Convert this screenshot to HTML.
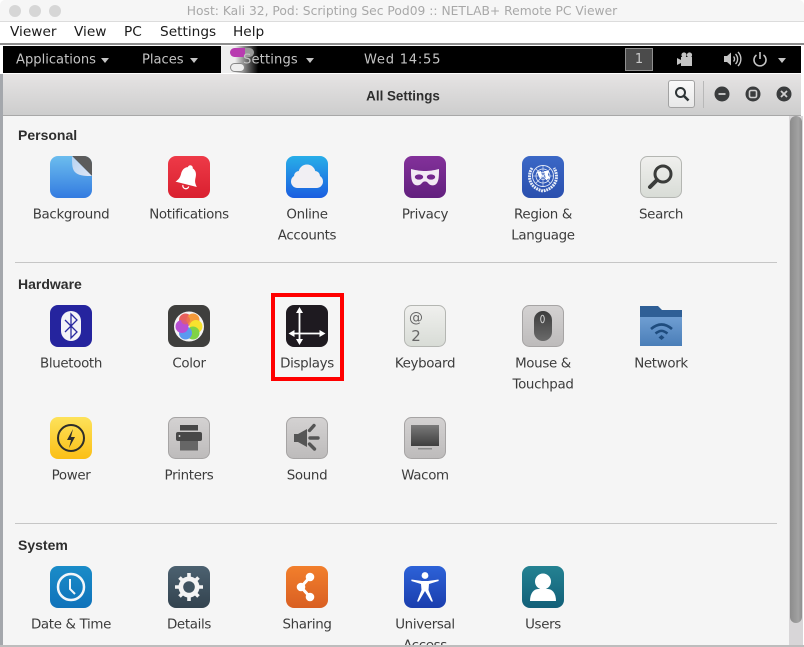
<!DOCTYPE html>
<html><head><meta charset="utf-8"><style>
html,body{margin:0;padding:0;width:804px;height:647px;overflow:hidden;background:#fff}
body{position:relative;font-family:"DejaVu Sans","Liberation Sans",sans-serif}
.a{position:absolute}
.t{position:absolute;white-space:nowrap;transform:translate(-50%,-50%);margin-top:1px;font-size:13.4px;letter-spacing:-.33px;color:#3c3c3c;line-height:1}
.h{position:absolute;left:18px;font-family:"Liberation Sans",sans-serif;font-size:14px;font-weight:bold;color:#2e2e2e;line-height:1;transform:translateY(-50%)}
.m{position:absolute;top:33px;transform:translateY(-50%);font-size:13.7px;color:#1a1a1a;line-height:1;white-space:nowrap}
.p{position:absolute;top:60px;transform:translateY(-50%);font-size:13.1px;color:#c4c4c4;line-height:1;white-space:nowrap}
svg.i{position:absolute;width:42px;height:42px}
.dot{position:absolute;top:5px;width:12px;height:12px;border-radius:50%;background:#d6d6d6}
.tri{position:absolute;width:0;height:0;border-left:4.5px solid transparent;border-right:4.5px solid transparent;border-top:5px solid #c4c4c4}
</style></head><body>
<div class="a" style="left:0;top:0;width:804px;height:22px;background:#f6f6f6;border-bottom:1px solid #dcdcdc;box-sizing:border-box;border-radius:5px 5px 0 0"></div>
<div class="dot" style="left:9px"></div><div class="dot" style="left:29px"></div><div class="dot" style="left:49px"></div>
<div class="a" style="left:0;width:804px;top:11px;transform:translateY(-50%);text-align:center;font-size:12.3px;color:#a8a8a8;line-height:1;white-space:nowrap">Host: Kali 32, Pod: Scripting Sec Pod09 :: NETLAB+ Remote PC Viewer</div>
<div class="m" style="left:10px">Viewer</div><div class="m" style="left:74px">View</div><div class="m" style="left:124px">PC</div><div class="m" style="left:160px">Settings</div><div class="m" style="left:233px">Help</div>
<div class="a" style="left:0;top:43px;width:804px;height:2px;background:#8e8e8e"></div>
<div class="a" style="left:0;top:74px;width:3px;height:573px;background:#a4a7ac"></div>
<div class="a" style="left:3px;top:46px;width:798px;height:27px;background:#000"></div>
<div class="a" style="left:221px;top:46px;width:37px;height:27px;background:linear-gradient(90deg,#eee 0,#eee 14px,#8a8a8a 23px,#000 37px)"></div>
<div class="a" style="left:230px;top:48px;width:24px;height:9px;border-radius:5px;background:linear-gradient(90deg,#b83cb0 62%,#999 62%)"></div>
<div class="a" style="left:230px;top:63px;width:13px;height:7px;border-radius:5px;border:1px solid #888;background:#eee"></div>
<div class="p" style="left:16px">Applications</div><div class="tri" style="left:101px;top:58px"></div>
<div class="p" style="left:142px">Places</div><div class="tri" style="left:190px;top:58px"></div>
<div class="p" style="left:243px;letter-spacing:.15px">Settings</div><div class="tri" style="left:306px;top:58px"></div>
<div class="p" style="left:364px;letter-spacing:.75px">Wed 14:55</div>
<div class="a" style="left:625px;top:48px;width:28px;height:23px;box-sizing:border-box;background:#4b4b4b;border:1px solid #909090;color:#c8c8c8;font-size:13px;line-height:21px;text-align:center">1</div>
<svg class="a" style="left:675px;top:50px" width="20" height="18" viewBox="0 0 20 18"><path d="M2 8l4 2v-3h11v9H6v-3l-4 2z" fill="#c4c4c4"/><circle cx="9" cy="5" r="2.6" fill="#c4c4c4"/><circle cx="14.5" cy="5" r="2.6" fill="#c4c4c4"/></svg>
<svg class="a" style="left:723px;top:50px" width="20" height="18" viewBox="0 0 20 18"><path d="M1 6h3l4-3.500v13L4 12H1z" fill="#c4c4c4"/><path d="M10.500 6.500a3.500 3.500 0 0 1 0 5M12.500 4a7 7 0 0 1 0 10M15 2a10 10 0 0 1 0 14" fill="none" stroke="#c4c4c4" stroke-width="1.4"/></svg>
<svg class="a" style="left:752px;top:49px" width="16" height="20" viewBox="0 0 16 20"><path d="M4.500 6a6 6 0 1 0 7 0" fill="none" stroke="#c4c4c4" stroke-width="1.6"/><path d="M8 3v7" stroke="#c4c4c4" stroke-width="1.6"/></svg>
<div class="tri" style="left:778px;top:58px"></div>
<div class="a" style="left:3px;top:74px;width:798px;height:42px;background:linear-gradient(#e6e4e4,#cdcdcd);border-bottom:1px solid #a8a8a8;box-sizing:border-box"></div>
<div class="a" style="left:0;width:804px;top:96px;transform:translateY(-50%);text-align:center;font-family:'Liberation Sans',sans-serif;font-size:13.4px;font-weight:bold;color:#2e2e2e;line-height:1;margin-left:1px">All Settings</div>
<div class="a" style="left:668px;top:80px;width:27px;height:28px;box-sizing:border-box;background:linear-gradient(#fafafa,#e8e8e8);border:1px solid #a2a2a2;border-radius:3px"></div>
<svg class="a" style="left:673px;top:85px" width="18" height="18" viewBox="0 0 18 18"><circle cx="7.500" cy="7.500" r="4.500" fill="none" stroke="#2e3436" stroke-width="2"/><path d="M11 11l4.500 4.500" stroke="#2e3436" stroke-width="2.6"/></svg>
<div class="a" style="left:703px;top:81px;width:1px;height:27px;background:#b8b8b8"></div>
<svg class="a" style="left:714px;top:86px" width="84" height="16" viewBox="0 0 84 16"><circle cx="8" cy="8" r="7.500" fill="#3a3c3d"/><path d="M4.500 8h7" stroke="#cfcfcf" stroke-width="1.8"/><circle cx="39" cy="8" r="7.500" fill="#3a3c3d"/><rect x="35.500" y="4.500" width="7" height="7" rx="1.500" fill="none" stroke="#cfcfcf" stroke-width="1.6"/><circle cx="70" cy="8" r="7.500" fill="#3a3c3d"/><path d="M67 5l6 6M73 5l-6 6" stroke="#cfcfcf" stroke-width="1.8"/></svg>
<div class="a" style="left:3px;top:116px;width:786px;height:530px;background:#f5f5f5"></div>
<div class="a" style="left:789px;top:116px;width:14px;height:530px;background:#d8d6d8"></div>
<div class="a" style="left:790px;top:116px;width:12px;height:507px;background:linear-gradient(90deg,#8c8c8c,#a2a2a2 70%,#8e8e8e);border-radius:6px"></div>
<div class="a" style="left:0;top:645px;width:804px;height:2px;background:#bdbdbd"></div>
<div class="h" style="top:135px">Personal</div><div class="h" style="top:284px">Hardware</div><div class="h" style="top:545px">System</div>
<div class="a" style="left:15px;top:262px;width:762px;height:1px;background:#c6c6c6"></div>
<div class="a" style="left:15px;top:523px;width:762px;height:1px;background:#c6c6c6"></div>

<svg width="0" height="0" style="position:absolute"><defs>
<linearGradient id="gB" x1="0" y1="0" x2="0" y2="1"><stop offset="0" stop-color="#6cbdee"/><stop offset="1" stop-color="#337be0"/></linearGradient>
<linearGradient id="gR" x1="0" y1="0" x2="0" y2="1"><stop offset="0" stop-color="#ee3a48"/><stop offset="1" stop-color="#d9202f"/></linearGradient>
<linearGradient id="gC" x1="0" y1="0" x2="0" y2="1"><stop offset="0" stop-color="#28aee8"/><stop offset="1" stop-color="#1a5de0"/></linearGradient>
<linearGradient id="gP" x1="0" y1="0" x2="0" y2="1"><stop offset="0" stop-color="#83319a"/><stop offset="1" stop-color="#62207e"/></linearGradient>
<linearGradient id="gU" x1="0" y1="0" x2="0" y2="1"><stop offset="0" stop-color="#3b68c6"/><stop offset="1" stop-color="#2a4fae"/></linearGradient>
<linearGradient id="gS" x1="0" y1="0" x2="0" y2="1"><stop offset="0" stop-color="#f0f0ee"/><stop offset="1" stop-color="#d8dcd6"/></linearGradient>
<linearGradient id="gG" x1="0" y1="0" x2="0" y2="1"><stop offset="0" stop-color="#d4d2d2"/><stop offset="1" stop-color="#bdbbbb"/></linearGradient>
<linearGradient id="gY" x1="0" y1="0" x2="0" y2="1"><stop offset="0" stop-color="#fde25a"/><stop offset="1" stop-color="#fbbf16"/></linearGradient>
<linearGradient id="gK" x1="0" y1="0" x2="0" y2="1"><stop offset="0" stop-color="#1a8cc8"/><stop offset="1" stop-color="#0f72ba"/></linearGradient>
<linearGradient id="gD" x1="0" y1="0" x2="0" y2="1"><stop offset="0" stop-color="#4c6170"/><stop offset="1" stop-color="#33434f"/></linearGradient>
<linearGradient id="gO" x1="0" y1="0" x2="0" y2="1"><stop offset="0" stop-color="#f27f2c"/><stop offset="1" stop-color="#d95f22"/></linearGradient>
<linearGradient id="gA" x1="0" y1="0" x2="0" y2="1"><stop offset="0" stop-color="#2d62d8"/><stop offset="1" stop-color="#1a3eae"/></linearGradient>
<linearGradient id="gT" x1="0" y1="0" x2="0" y2="1"><stop offset="0" stop-color="#248292"/><stop offset="1" stop-color="#125f78"/></linearGradient>
<linearGradient id="gH" x1="0" y1="0" x2="0" y2="1"><stop offset="0" stop-color="#7a7a7a"/><stop offset="1" stop-color="#3e3e3e"/></linearGradient>
<linearGradient id="gM" x1="0" y1="0" x2="0" y2="1"><stop offset="0" stop-color="#3c3c3c"/><stop offset="1" stop-color="#6a6a6a"/></linearGradient>
<linearGradient id="gN" x1="0" y1="0" x2="0" y2="1"><stop offset="0" stop-color="#6f9ed2"/><stop offset="1" stop-color="#4a7eb8"/></linearGradient>
<linearGradient id="gF" x1="0" y1="0" x2="1" y2="1"><stop offset="0" stop-color="#b6d2f2"/><stop offset="1" stop-color="#dfe6f4"/></linearGradient>
</defs></svg>

<!-- Row 1 -->
<svg class="i" style="left:50px;top:156px" viewBox="0 0 42 42"><rect width="42" height="42" rx="8" fill="url(#gB)"/><path d="M22 0h12a8 8 0 0 1 8 8v12z" fill="#5c5c5c"/><path d="M22 0c0 9 0 14 4 17 4 3 10 3 16 3z" fill="url(#gF)"/></svg>
<div class="t" style="left:71px;top:214px">Background</div>
<svg class="i" style="left:168px;top:156px" viewBox="0 0 42 42"><rect width="42" height="42" rx="8" fill="url(#gR)"/><g transform="rotate(14 20 21)"><path d="M20 9a2.500 2.500 0 0 1 2.500 2.500c3.500 1 5 4.500 5 8 0 4.500 1 6 3.500 9H9c2.500-3 3.500-4.500 3.500-9 0-3.500 1.500-7 5-8A2.500 2.500 0 0 1 20 9z" fill="#fff"/><path d="M17 30a3 3 0 0 0 6 0" fill="none" stroke="#fff" stroke-width="1.200"/></g></svg>
<div class="t" style="left:189px;top:214px">Notifications</div>
<svg class="i" style="left:286px;top:156px" viewBox="0 0 42 42"><rect width="42" height="42" rx="8" fill="url(#gC)"/><rect x="5" y="19" width="32" height="13" rx="6.500" fill="#f1eff3"/><circle cx="21" cy="17" r="8.500" fill="#f1eff3"/><circle cx="13" cy="20" r="5" fill="#f1eff3"/><circle cx="29" cy="20" r="5" fill="#f1eff3"/></svg>
<div class="t" style="left:307px;top:214px">Online</div><div class="t" style="left:307px;top:235px">Accounts</div>
<svg class="i" style="left:404px;top:156px" viewBox="0 0 42 42"><rect width="42" height="42" rx="8" fill="url(#gP)"/><path d="M7 13c6 1.500 10 2 14 2s8-.5 14-2c0 6 0 11-2 14-2 3-6 3-8 1-1.500-1.500-2-2.500-4-2.500s-2.500 1-4 2.500c-2 2-6 2-8-1-2-3-2-8-2-14z" fill="#f2eaf4"/><ellipse cx="15" cy="21" rx="4.200" ry="2.600" fill="#74288e"/><ellipse cx="27" cy="21" rx="4.200" ry="2.600" fill="#74288e"/></svg>
<div class="t" style="left:425px;top:214px">Privacy</div>
<svg class="i" style="left:522px;top:156px" viewBox="0 0 42 42"><rect width="42" height="42" rx="8" fill="url(#gU)"/><path d="M10 12C5 20 7 32 21 35c14-3 16-15 11-23" fill="none" stroke="#e6ecf8" stroke-width="3" stroke-dasharray="1.800 .8"/><circle cx="21" cy="20" r="10.500" fill="none" stroke="#e6ecf8" stroke-width=".9"/><circle cx="21" cy="20" r="7" fill="none" stroke="#e6ecf8" stroke-width=".8"/><circle cx="21" cy="20" r="3.500" fill="none" stroke="#e6ecf8" stroke-width=".7"/><path d="M21 9.500v21M10.500 20h21M13.500 12.500l15 15M28.500 12.500l-15 15" stroke="#e6ecf8" stroke-width=".6"/><path d="M15 16l4-1 1 5-2 3zM22 15l5 0-1 4 2 3-4 2-1-5z" fill="#fff"/></svg>
<div class="t" style="left:543px;top:214px">Region &amp;</div><div class="t" style="left:543px;top:235px">Language</div>
<svg class="i" style="left:640px;top:156px" viewBox="0 0 42 42"><rect x=".5" y=".5" width="41" height="41" rx="7" fill="url(#gS)" stroke="#b4b6b2"/><circle cx="23" cy="18" r="8" fill="none" stroke="#3a3c3a" stroke-width="3"/><path d="M17 24l-7 7" stroke="#3a3c3a" stroke-width="4" stroke-linecap="round"/></svg>
<div class="t" style="left:661px;top:214px">Search</div>
<!-- Row 2 -->
<svg class="i" style="left:50px;top:305px" viewBox="0 0 42 42"><rect width="42" height="42" rx="8" fill="#25249e"/><rect x="11" y="6" width="20" height="30" rx="10" fill="#f4f4f8"/><path d="M15 15l12 12-6 6V9l6 6-12 12" fill="none" stroke="#2a2aa0" stroke-width="1.300"/></svg>
<div class="t" style="left:71px;top:363px">Bluetooth</div>
<svg class="i" style="left:168px;top:305px" viewBox="0 0 42 42"><rect width="42" height="42" rx="8" fill="#3f3f3d"/><circle cx="21" cy="21.500" r="15" fill="#f4f4f4"/><circle cx="17.500" cy="15" r="6.500" fill="#e8605c"/><circle cx="25" cy="15" r="6.500" fill="#f49a3a"/><circle cx="28" cy="21.500" r="6.500" fill="#f7e22e"/><circle cx="25" cy="28" r="6.500" fill="#80d244"/><circle cx="17.500" cy="28" r="6.500" fill="#5a9af0"/><path d="M14 21.500m-6.500 0a6.500 6.500 0 1 1 13 0 6.500 6.500 0 1 1-13 0" fill="#b84fd4"/><circle cx="17.500" cy="15" r="4.500" fill="#e8605c" opacity=".7"/></svg>
<div class="t" style="left:189px;top:363px">Color</div>
<svg class="i" style="left:286px;top:305px" viewBox="0 0 42 42"><rect width="42" height="42" rx="8" fill="#1e1a20"/><path d="M13.500 5v32M5 28.500h32" stroke="#fff" stroke-width="1.800"/><path d="M13.500 2l-3.500 6h7zM13.500 40l-3.500-6h7zM2.500 28.500l6-3.500v7zM39.500 28.500l-6-3.500v7z" fill="#fff"/></svg>
<div class="t" style="left:307px;top:363px">Displays</div>
<svg class="i" style="left:404px;top:305px" viewBox="0 0 42 42"><rect x=".5" y=".5" width="41" height="41" rx="7" fill="url(#gS)" stroke="#b4b6b2"/><text x="12" y="17" text-anchor="middle" font-family="DejaVu Sans" font-size="14" fill="#666">@</text><text x="12" y="36" text-anchor="middle" font-family="DejaVu Sans" font-size="15" fill="#666">2</text></svg>
<div class="t" style="left:425px;top:363px">Keyboard</div>
<svg class="i" style="left:522px;top:305px" viewBox="0 0 42 42"><rect x=".5" y=".5" width="41" height="41" rx="7" fill="url(#gG)" stroke="#a6a4a4"/><rect x="12" y="6" width="18" height="30" rx="9" fill="url(#gM)"/><ellipse cx="20.500" cy="14" rx="1.800" ry="3.800" fill="none" stroke="#ddd" stroke-width=".9"/></svg>
<div class="t" style="left:543px;top:363px">Mouse &amp;</div><div class="t" style="left:543px;top:384px">Touchpad</div>
<svg class="i" style="left:640px;top:305px" viewBox="0 0 42 42"><path d="M0 1h18l4 4h21v10H0z" fill="#2f5f96"/><rect y="12" width="43" height="29" fill="url(#gN)"/><path d="M11 24c7-6 14-6 21 0M15.500 28.500c4.500-3.500 7.500-3.500 12 0" fill="none" stroke="#1e4c7e" stroke-width="2.600"/><path d="M18.500 32.500l3-2.500 3 2.500-3 2.500z" fill="#1e4c7e"/></svg>
<div class="t" style="left:661px;top:363px">Network</div>
<!-- Row 3 -->
<svg class="i" style="left:50px;top:417px" viewBox="0 0 42 42"><rect width="42" height="42" rx="8" fill="url(#gY)"/><circle cx="21" cy="21" r="13" fill="none" stroke="#2e2e2a" stroke-width="2"/><path d="M23 12l-6 11h4l-2 8 6-11h-4z" fill="#2e2e2a"/></svg>
<div class="t" style="left:71px;top:475px">Power</div>
<svg class="i" style="left:168px;top:417px" viewBox="0 0 42 42"><rect x=".5" y=".5" width="41" height="41" rx="7" fill="url(#gG)" stroke="#a6a4a4"/><rect x="12" y="8" width="18" height="5.500" fill="#484848"/><rect x="8" y="15" width="26" height="9" rx="2" fill="#484848"/><circle cx="11.500" cy="19" r=".9" fill="#eee"/><rect x="12" y="24" width="18" height="9.500" fill="#666"/></svg>
<div class="t" style="left:189px;top:475px">Printers</div>
<svg class="i" style="left:286px;top:417px" viewBox="0 0 42 42"><rect x=".5" y=".5" width="41" height="41" rx="7" fill="url(#gG)" stroke="#a6a4a4"/><path d="M8 17h4l9-5v18l-9-5H8z" fill="#555"/><path d="M23.500 13.500l4.500-5M24 21h8M23.500 27l5 5" stroke="#555" stroke-width="3.400" stroke-linecap="round"/></svg>
<div class="t" style="left:307px;top:475px">Sound</div>
<svg class="i" style="left:404px;top:417px" viewBox="0 0 42 42"><rect x=".5" y=".5" width="41" height="41" rx="7" fill="url(#gG)" stroke="#a6a4a4"/><rect x="7" y="8" width="28" height="21" fill="url(#gH)"/><rect x="14" y="31" width="14" height="1.500" fill="#8a8a8a"/></svg>
<div class="t" style="left:425px;top:475px">Wacom</div>
<!-- Row 4 -->
<svg class="i" style="left:50px;top:566px" viewBox="0 0 42 42"><rect width="42" height="42" rx="8" fill="url(#gK)"/><circle cx="21" cy="21" r="13" fill="none" stroke="#f2f6fa" stroke-width="2.500"/><path d="M20 13v10l5 5" fill="none" stroke="#f2f6fa" stroke-width="2"/></svg>
<div class="t" style="left:71px;top:624px">Date &amp; Time</div>
<svg class="i" style="left:168px;top:566px" viewBox="0 0 42 42"><rect width="42" height="42" rx="8" fill="url(#gD)"/><circle cx="21" cy="21" r="10.500" fill="#f4f4f4"/><path d="M21 7v28M7 21h28M11.500 11.500l19 19M30.500 11.500l-19 19" stroke="#f4f4f4" stroke-width="3.600"/><circle cx="21" cy="21" r="5.800" fill="#405360"/></svg>
<div class="t" style="left:189px;top:624px">Details</div>
<svg class="i" style="left:286px;top:566px" viewBox="0 0 42 42"><rect width="42" height="42" rx="8" fill="url(#gO)"/><path d="M24 11L15 21l9 10" fill="none" stroke="#fff" stroke-width="3"/><circle cx="24" cy="11" r="4.300" fill="#fff"/><circle cx="15" cy="21" r="4.300" fill="#fff"/><circle cx="24" cy="31" r="4.300" fill="#fff"/></svg>
<div class="t" style="left:307px;top:624px">Sharing</div>
<svg class="i" style="left:404px;top:566px" viewBox="0 0 42 42"><rect width="42" height="42" rx="8" fill="url(#gA)"/><circle cx="21" cy="9.500" r="3.400" fill="#fff"/><path d="M7.500 13.500L18 15h6l10.500-1.500.2 1.500L25 18l-.5 6 4.500 11.500h-1.700L21 25l-6.300 10.500H13l4.500-11.500-.5-6-9.700-3z" fill="#fff"/></svg>
<div class="t" style="left:425px;top:624px">Universal</div>
<div class="a" style="left:300px;top:637px;width:250px;height:8px;overflow:hidden"><div class="t" style="left:125px;top:8px">Access</div></div>
<svg class="i" style="left:522px;top:566px" viewBox="0 0 42 42"><rect width="42" height="42" rx="8" fill="url(#gT)"/><circle cx="21" cy="15.500" r="8" fill="#fff"/><path d="M8 35c0-8 4-12 8-12h10c4 0 8 4 8 12z" fill="#fff"/></svg>
<div class="t" style="left:543px;top:624px">Users</div>
<div class="a" style="left:271px;top:293px;width:73px;height:88px;box-sizing:border-box;border:4px solid #f00"></div>
</body></html>
